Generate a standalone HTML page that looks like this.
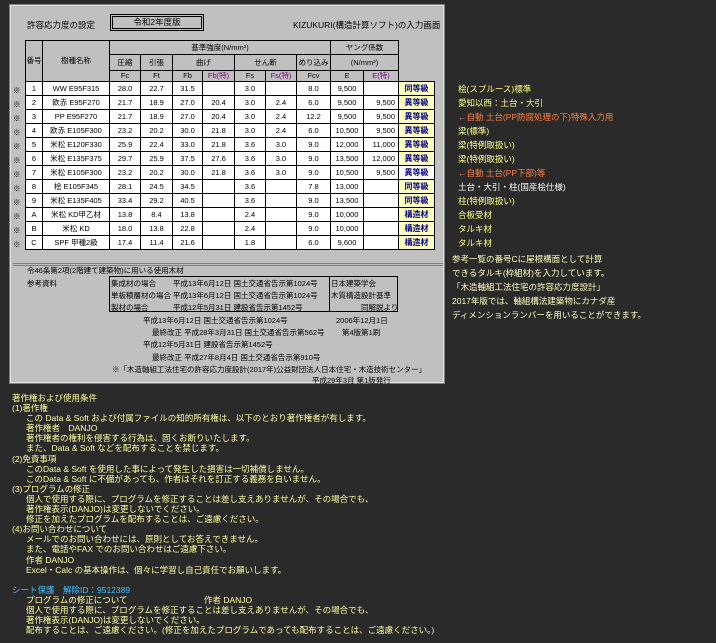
<!DOCTYPE html>
<html><head><meta charset="utf-8"><style>
*{margin:0;padding:0;box-sizing:border-box}
body{width:716px;height:643px;background:#2a2a2a;position:relative;overflow:hidden;font-family:"Liberation Sans","Noto Sans CJK JP",sans-serif;font-size:8px;color:#000}
.a{position:absolute;white-space:nowrap}
.panel{position:absolute;left:10px;top:5px;width:434px;height:378px;background:#c0c0c0;border:1px solid #e0e0e0;outline:1px solid #808080}
table{position:absolute;left:25px;top:40px;border-collapse:collapse;table-layout:fixed}
td{border:1px solid #000;text-align:center;font-size:7.5px;padding:0;overflow:hidden;white-space:nowrap;line-height:1}
td.r{text-align:right;padding-right:3px}
td.w{background:#fff}
td.y{background:#ffffc0;color:#000080;font-weight:bold;font-size:8px}
td.n{border:none}
.p{color:#800080}
.note{position:absolute;left:458px;font-size:8.5px;color:#ffff80;white-space:nowrap}
.o{color:#ff8040}
.t{position:absolute;font-size:8.5px;color:#ffffa0;white-space:nowrap}
.s{font-size:7.5px}
</style></head><body>
<div class="panel"></div>
<div class="a" style="left:13px;top:263px;width:430px;border-top:3px double #808080"></div>
<div class="a" style="left:27px;top:19px;font-size:8.5px">許容応力度の設定</div>
<div class="a" style="left:110px;top:14px;width:94px;height:17px;border:3px double #000;text-align:center;font-size:8.5px;line-height:11px">令和2年度版</div>
<div class="a" style="left:293px;top:19px;font-size:8.5px">KIZUKURI(構造計算ソフト)の入力画面</div>
<table>
<colgroup><col style="width:17px"><col style="width:67px"><col style="width:31px"><col style="width:32px"><col style="width:30px"><col style="width:32px"><col style="width:31px"><col style="width:31px"><col style="width:34px"><col style="width:33px"><col style="width:35px"><col style="width:36px"></colgroup>
<tr style="height:14px"><td rowspan="3">番号</td><td rowspan="3">樹種名称</td><td colspan="7">基準強度(N/mm²)</td><td colspan="2">ヤング係数</td><td class="n"></td></tr>
<tr style="height:16px"><td>圧縮</td><td>引張</td><td colspan="2">曲げ</td><td colspan="2">せん断</td><td>めり込み</td><td colspan="2" style="border-top:none">(N/mm²)</td><td class="n"></td></tr>
<tr style="height:11px"><td>Fc</td><td>Ft</td><td>Fb</td><td class="p">Fb(特)</td><td>Fs</td><td class="p">Fs(特)</td><td>Fcv</td><td>E</td><td class="p">E(特)</td><td class="n"></td></tr>
<tr style="height:14px"><td class="w">1</td><td class="w">WW E95F315</td><td class="w">28.0</td><td class="w">22.7</td><td class="w">31.5</td><td class="w"></td><td class="w">3.0</td><td class="w"></td><td class="w">8.0</td><td class="w">9,500</td><td class="w"></td><td class="y">同等級</td></tr>
<tr style="height:14px"><td class="w">2</td><td class="w">欧赤 E95F270</td><td class="w">21.7</td><td class="w">18.9</td><td class="w">27.0</td><td class="w">20.4</td><td class="w">3.0</td><td class="w">2.4</td><td class="w">6.0</td><td class="w">9,500</td><td class="w r">9,500</td><td class="y">異等級</td></tr>
<tr style="height:14px"><td class="w">3</td><td class="w">PP E95F270</td><td class="w">21.7</td><td class="w">18.9</td><td class="w">27.0</td><td class="w">20.4</td><td class="w">3.0</td><td class="w">2.4</td><td class="w">12.2</td><td class="w">9,500</td><td class="w r">9,500</td><td class="y">異等級</td></tr>
<tr style="height:14px"><td class="w">4</td><td class="w">欧赤 E105F300</td><td class="w">23.2</td><td class="w">20.2</td><td class="w">30.0</td><td class="w">21.8</td><td class="w">3.0</td><td class="w">2.4</td><td class="w">6.0</td><td class="w">10,500</td><td class="w r">9,500</td><td class="y">異等級</td></tr>
<tr style="height:14px"><td class="w">5</td><td class="w">米松 E120F330</td><td class="w">25.9</td><td class="w">22.4</td><td class="w">33.0</td><td class="w">21.8</td><td class="w">3.6</td><td class="w">3.0</td><td class="w">9.0</td><td class="w">12,000</td><td class="w r">11,000</td><td class="y">異等級</td></tr>
<tr style="height:14px"><td class="w">6</td><td class="w">米松 E135F375</td><td class="w">29.7</td><td class="w">25.9</td><td class="w">37.5</td><td class="w">27.6</td><td class="w">3.6</td><td class="w">3.0</td><td class="w">9.0</td><td class="w">13,500</td><td class="w r">12,000</td><td class="y">異等級</td></tr>
<tr style="height:14px"><td class="w">7</td><td class="w">米松 E105F300</td><td class="w">23.2</td><td class="w">20.2</td><td class="w">30.0</td><td class="w">21.8</td><td class="w">3.6</td><td class="w">3.0</td><td class="w">9.0</td><td class="w">10,500</td><td class="w r">9,500</td><td class="y" style="background:#fff">異等級</td></tr>
<tr style="height:14px"><td class="w">8</td><td class="w">桧 E105F345</td><td class="w">28.1</td><td class="w">24.5</td><td class="w">34.5</td><td class="w"></td><td class="w">3.6</td><td class="w"></td><td class="w">7.8</td><td class="w">13,000</td><td class="w"></td><td class="y">同等級</td></tr>
<tr style="height:14px"><td class="w">9</td><td class="w">米松 E135F405</td><td class="w">33.4</td><td class="w">29.2</td><td class="w">40.5</td><td class="w"></td><td class="w">3.6</td><td class="w"></td><td class="w">9.0</td><td class="w">13,500</td><td class="w"></td><td class="y">同等級</td></tr>
<tr style="height:14px"><td class="w">A</td><td class="w">米松 KD甲乙材</td><td class="w">13.8</td><td class="w">8.4</td><td class="w">13.8</td><td class="w"></td><td class="w">2.4</td><td class="w"></td><td class="w">9.0</td><td class="w">10,000</td><td class="w"></td><td class="y">構造材</td></tr>
<tr style="height:14px"><td class="w">B</td><td class="w">米松 KD</td><td class="w">18.0</td><td class="w">13.8</td><td class="w">22.8</td><td class="w"></td><td class="w">2.4</td><td class="w"></td><td class="w">9.0</td><td class="w">10,000</td><td class="w"></td><td class="y">構造材</td></tr>
<tr style="height:14px"><td class="w">C</td><td class="w">SPF 甲種2級</td><td class="w">17.4</td><td class="w">11.4</td><td class="w">21.6</td><td class="w"></td><td class="w">1.8</td><td class="w"></td><td class="w">6.0</td><td class="w">9,600</td><td class="w"></td><td class="y">構造材</td></tr>
</table>
<div class="a" style="left:13px;top:84px;font-size:7.5px;line-height:14px">※<br>※<br>※<br>※<br>※<br>※<br>※<br>※<br>※<br>※<br>※<br>※</div>
<div class="a s" style="left:27px;top:265px">令46条第2項(2階建て建築物)に用いる使用木材</div>
<div class="a s" style="left:27px;top:278px">参考資料</div>
<div class="a" style="left:109px;top:276px;width:289px;height:36px;border:1px solid #000"></div>
<div class="a" style="left:329px;top:276px;height:36px;border-left:1px solid #000"></div>
<div class="a s" style="left:111px;top:278px;line-height:12px;width:62px;overflow:hidden">集成材の場合<br>単板積層材の場合<br>製材の場合</div>
<div class="a s" style="left:173px;top:278px;line-height:12px">平成13年6月12日 国土交通省告示第1024号<br>平成13年6月12日 国土交通省告示第1024号<br>平成12年5月31日 建設省告示第1452号</div>
<div class="a s" style="left:331px;top:278px;line-height:12px">日本建築学会<br>木質構造設計基準<br><span style="padding-left:30px">同解説より</span></div>
<div class="a s" style="left:143px;top:315px">平成13年6月12日 国土交通省告示第1024号</div>
<div class="a s" style="left:336px;top:315px">2006年12月1日</div>
<div class="a s" style="left:152px;top:327px">最終改正 平成28年3月31日 国土交通省告示第562号</div>
<div class="a s" style="left:342px;top:327px">第4版第1刷</div>
<div class="a s" style="left:143px;top:339px">平成12年5月31日 建設省告示第1452号</div>
<div class="a s" style="left:152px;top:352px">最終改正 平成27年8月4日 国土交通省告示第910号</div>
<div class="a s" style="left:112px;top:364px">※「木造軸組工法住宅の許容応力度設計(2017年)公益財団法人日本住宅・木造技術センター」</div>
<div class="a s" style="left:312px;top:375px">平成29年3月 第1版発行</div>

<div class="note" style="top:83px">桧(スプルース)標準</div>
<div class="note" style="top:97px">愛知以西：土台・大引</div>
<div class="note o" style="top:111px">←自動 土台(PP防腐処理の下)特殊入力用</div>
<div class="note" style="top:125px">梁(標準)</div>
<div class="note" style="top:139px">梁(特例取扱い)</div>
<div class="note" style="top:153px">梁(特例取扱い)</div>
<div class="note o" style="top:167px">←自動 土台(PP下部)等</div>
<div class="note" style="top:181px;color:#fff">土台・大引・柱(国産桧仕様)</div>
<div class="note" style="top:195px">柱(特例取扱い)</div>
<div class="note" style="top:209px">合板受材</div>
<div class="note" style="top:223px">タルキ材</div>
<div class="note" style="top:237px">タルキ材</div>
<div class="note" style="left:452px;top:252px;line-height:14px;color:#ffffc0">参考一覧の番号Cに屋根構面として計算<br>できるタルキ(枠組材)を入力しています。<br>「木造軸組工法住宅の許容応力度設計」<br>2017年版では、軸組構法建築物にカナダ産<br>ディメンションランバーを用いることができます。</div>

<div class="t" style="left:12px;top:393px;line-height:10.1px">著作権および使用条件<br>(1)著作権<br><span style="padding-left:14px">この Data &amp; Soft および付属ファイルの知的所有権は、以下のとおり著作権者が有します。</span><br><span style="padding-left:14px">著作権者　DANJO</span><br><span style="padding-left:14px">著作権者の権利を侵害する行為は、固くお断りいたします。</span><br><span style="padding-left:14px">また、Data &amp; Soft などを配布することを禁じます。</span><br>(2)免責事項<br><span style="padding-left:14px">このData &amp; Soft を使用した事によって発生した損害は一切補償しません。</span><br><span style="padding-left:14px">このData &amp; Soft に不備があっても、作者はそれを訂正する義務を負いません。</span><br>(3)プログラムの修正<br><span style="padding-left:14px">個人で使用する際に、プログラムを修正することは差し支えありませんが、その場合でも、</span><br><span style="padding-left:14px">著作権表示(DANJO)は変更しないでください。</span><br><span style="padding-left:14px">修正を加えたプログラムを配布することは、ご遠慮ください。</span><br>(4)お問い合わせについて<br><span style="padding-left:14px">メールでのお問い合わせには、原則としてお答えできません。</span><br><span style="padding-left:14px">また、電話やFAX でのお問い合わせはご遠慮下さい。</span><br><span style="padding-left:14px">作者 DANJO</span><br><span style="padding-left:14px">Excel・Calc の基本操作は、個々に学習し自己責任でお願いします。</span><br>&nbsp;<br><span style="color:#40c0ff">シート保護　解除ID：9512389</span><br><span style="padding-left:14px">プログラムの修正について　　　　　　　　　作者 DANJO</span><br><span style="padding-left:14px">個人で使用する際に、プログラムを修正することは差し支えありませんが、その場合でも、</span><br><span style="padding-left:14px">著作権表示(DANJO)は変更しないでください。</span><br><span style="padding-left:14px">配布することは、ご遠慮ください。(修正を加えたプログラムであっても配布することは、ご遠慮ください。)</span></div>
</body></html>
